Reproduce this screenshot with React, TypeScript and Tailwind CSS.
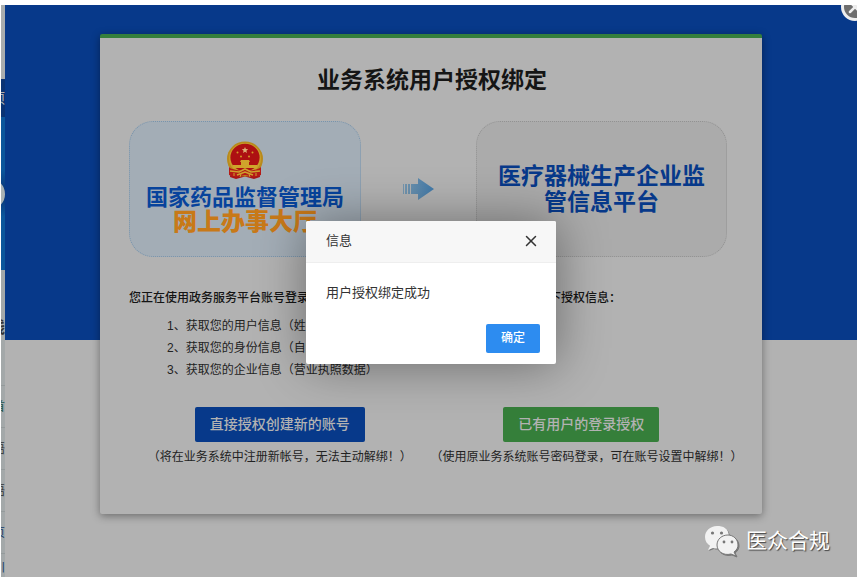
import { useState } from "react";
import { X } from "lucide-react";

const permissions = [
  "1、获取您的用户信息（姓名、手机号码）",
  "2、获取您的身份信息（自然人身份信息）",
  "3、获取您的企业信息（营业执照数据）",
];

const Emblem = () => (
  <svg viewBox="0 0 38 38" className="h-[38px] w-[38px]" aria-hidden="true">
    <path d="M5 25 L4 36 L10 38 L19 35.5 L28 38 L34 36 L33 25Z" fill="#a81418" />
    <ellipse cx="19" cy="18" rx="18" ry="17.5" fill="#b98a1c" />
    <ellipse cx="19" cy="17.5" rx="16" ry="15.5" fill="#c99f2a" />
    <ellipse cx="19" cy="16.5" rx="14.6" ry="13.8" fill="#ad1012" />
    <path d="M19 6l.9 2.1 2.3.2-1.8 1.5.6 2.3-2-1.3-2 1.3.6-2.3-1.8-1.5 2.3-.2z" fill="#dcae74" />
    <g fill="#d39a27">
      <circle cx="11.5" cy="11.5" r="1" />
      <circle cx="26.5" cy="11.5" r="1" />
      <circle cx="15" cy="15.5" r="1" />
      <circle cx="23" cy="15.5" r="1" />
    </g>
    <path d="M15 19h8l1 2h-1v3h8v3H7v-3h8v-3h-1z" fill="#cfa42b" />
    <path d="M3 26c5 5 27 5 32 0v8l-6 2-10-2-10 2-6-2z" fill="#b51a16" />
    <path d="M4 30l9 1 6-3 6 3 9-1M11 34l8-3 8 3" fill="none" stroke="#cda12c" strokeWidth="1.6" />
    <path d="M8 35v-3M30 35v-3M14 36l1-3M24 36l-1-3" stroke="#cda12c" strokeWidth="1" />
  </svg>
);

const Arrow = () => (
  <svg viewBox="0 0 31 24" className="h-6 w-[31px]" aria-hidden="true">
    <defs>
      <linearGradient id="arrow" x1="0" x2="1">
        <stop offset="0" stopColor="#7596ae" />
        <stop offset="1" stopColor="#4079a9" />
      </linearGradient>
    </defs>
    <path d="M0 7h1v10H0zM2 7h2v10H2zM5 7h2v10H5zM8 7h7V1l16 11-16 11v-6H8z" fill="url(#arrow)" />
  </svg>
);

const WeChat = () => (
  <svg viewBox="0 0 36 32" className="h-8 w-9 drop-shadow-[1px_1px_0_#777777]" aria-hidden="true">
    <path d="M13 1C6 1 1 6 1 12c0 4 2 7 5 9l-2 4 5-2c7 2 16-2 16-11S19 1 13 1z" fill="#f2f2f2" />
    <path d="M24 10c-6 0-11 4-11 10s6 11 14 9l5 2-2-4c3-2 4-5 4-7 0-6-5-10-10-10z" fill="#f2f2f2" stroke="#777777" strokeWidth="1" />
    <g fill="#777777">
      <circle cx="8.5" cy="8" r="1.6" />
      <circle cx="17.5" cy="8" r="1.6" />
      <circle cx="20" cy="17" r="1.4" />
      <circle cx="28" cy="17" r="1.4" />
    </g>
  </svg>
);

// Sliver of the page that stays visible to the left of the popup
const PageEdge = () => (
  <div className="flex w-1 shrink-0 flex-col overflow-hidden bg-[#a3a8a9] text-[12px] text-[#333333]" aria-hidden="true">
    <div className="h-[74px] bg-[#a9adae]" />
    <div className="flex h-[38px] items-center justify-end bg-[#0a3374] text-[14px] text-[#b2b2b2]">
      <span>项</span>
    </div>
    <div className="flex h-[153px] items-center justify-end bg-linear-to-b from-[#0b569b] from-35% via-[#0a3374] via-50% to-[#0b569b] to-65%">
      <span className="h-8 w-8 shrink-0 rounded-full bg-[#a9b2b4]" />
    </div>
    <div className="flex h-[116px] items-center justify-end border-b border-[#949a9b] text-[16px] font-bold">
      <span>线</span>
    </div>
    <div className="flex h-[42px] items-center justify-end border-b border-[#949a9b] text-[#24544b]">
      <span>首</span>
    </div>
    <div className="flex h-[42px] items-center justify-end border-b border-[#949a9b]">
      <span>语</span>
    </div>
    <div className="flex h-[42px] items-center justify-end border-b border-[#949a9b]">
      <span>语</span>
    </div>
    <div className="flex h-[42px] items-center justify-end border-b border-[#949a9b] text-[#183b68]">
      <span>页</span>
    </div>
    <div className="flex flex-1 items-end justify-end text-[#183b68]">
      <span>川</span>
    </div>
  </div>
);

const MessageDialog = ({ onClose }: { onClose: () => void }) => (
  <div className="absolute inset-0 flex items-center justify-center pt-[2px]">
    <div
      role="dialog"
      aria-labelledby="dialog-title"
      className="w-[250px] rounded-xs bg-white text-[13px] text-[#333333] shadow-[1px_1px_50px_rgba(0,0,0,0.4)]"
    >
      <div className="flex h-[42px] items-center justify-between rounded-t-xs border-b border-[#eeeeee] bg-[#f7f7f7] pr-4 pl-5">
        <h2 id="dialog-title">信息</h2>
        <button type="button" aria-label="关闭" onClick={onClose}>
          <X className="h-[18px] w-[18px] text-[#333333]" strokeWidth={2} />
        </button>
      </div>
      <p className="px-5 pt-5 pb-[21px] leading-5">用户授权绑定成功</p>
      <div className="flex justify-end px-4 pb-[11px]">
        <button
          type="button"
          onClick={onClose}
          className="h-[29px] rounded-xs bg-[#2d8cf0] px-[15px] text-[12px] font-medium text-white"
        >
          确定
        </button>
      </div>
    </div>
  </div>
);

export default function App() {
  const [open, setOpen] = useState(true);

  return (
    <div className="flex min-h-screen bg-white pt-[5px] pb-[2px] pl-px font-['Liberation_Sans','Noto_Sans_CJK_SC',sans-serif]">
      <PageEdge />
      <main className="relative flex-1 overflow-hidden bg-[#b2b2b2] bg-[linear-gradient(to_bottom,#07398a_335px,#b2b2b2_335px)] px-[95px] pt-[29px] pb-[62px]">
        <section className="rounded-xs border-t-4 border-[#357f3c] bg-[#b2b2b2] pt-6 pr-[27px] pb-[46px] pl-[29px] shadow-[0_2px_8px_rgba(0,0,0,0.4)]">
          <h1 className="text-center text-[23px] leading-9 font-bold text-[#151515]">业务系统用户授权绑定</h1>

          <div className="mt-[23px] flex items-center justify-between pr-2">
            <div className="flex h-[136px] w-[232px] flex-col items-center rounded-3xl border border-dotted border-[#7894ac] bg-[#a3adb6] pt-[19px]">
              <Emblem />
              <p className="mt-[7px] text-[22px] leading-6 font-bold whitespace-nowrap text-[#07439c]">国家药品监督管理局</p>
              <p className="text-[24px] leading-6 font-black text-[#c87918]">网上办事大厅</p>
            </div>
            <Arrow />
            <div className="flex h-[136px] w-[251px] items-center rounded-3xl border border-dotted border-[#929292] bg-[#ababab] px-5">
              <p className="text-center text-[23px] leading-[26px] font-bold text-[#07398a]">医疗器械生产企业监管信息平台</p>
            </div>
          </div>

          <p className="mt-[30px] flex justify-between pr-[114px] text-[12px] leading-[22px] font-medium whitespace-nowrap text-[#151515]">
            <span>您正在使用政务服务平台账号登录“</span>
            <span>下授权信息：</span>
          </p>
          <ul className="mt-[6px] pl-[38px] text-[12px] leading-[22px] text-[#222222]">
            {permissions.map((item) => (
              <li key={item}>{item}</li>
            ))}
          </ul>

          <div className="mt-[26px] grid grid-cols-2 pr-[3px] text-center">
            <div>
              <button type="button" className="h-[35px] rounded-xs bg-[#07398a] px-[15px] text-[14px] font-medium text-[#b2b2b2]">
                直接授权创建新的账号
              </button>
              <p className="mt-1 text-[12px] leading-[22px] whitespace-nowrap text-[#222222]">（将在业务系统中注册新帐号，无法主动解绑！）</p>
            </div>
            <div>
              <button type="button" className="h-[35px] rounded-xs bg-[#357f3a] px-[15px] text-[14px] font-medium text-[#b2b2b2]">
                已有用户的登录授权
              </button>
              <p className="mt-1 text-[12px] leading-[22px] whitespace-nowrap text-[#222222]">（使用原业务系统账号密码登录，可在账号设置中解绑！）</p>
            </div>
          </div>
        </section>

        {open && <MessageDialog onClose={() => setOpen(false)} />}

        <button
          type="button"
          aria-label="关闭窗口"
          className="absolute -top-3 -right-3 flex h-7 w-7 items-center justify-center rounded-full border-3 border-[#eeeeee] bg-[#6e6e6e]"
        >
          <X className="h-5 w-5 shrink-0 text-[#eeeeee]" strokeWidth={3} />
        </button>

        <div className="absolute right-[27px] bottom-5 flex items-center gap-[6px] text-[21px] leading-8 text-white [text-shadow:1px_1px_1px_#444444]">
          <WeChat />
          <span>医众合规</span>
        </div>
      </main>
    </div>
  );
}
